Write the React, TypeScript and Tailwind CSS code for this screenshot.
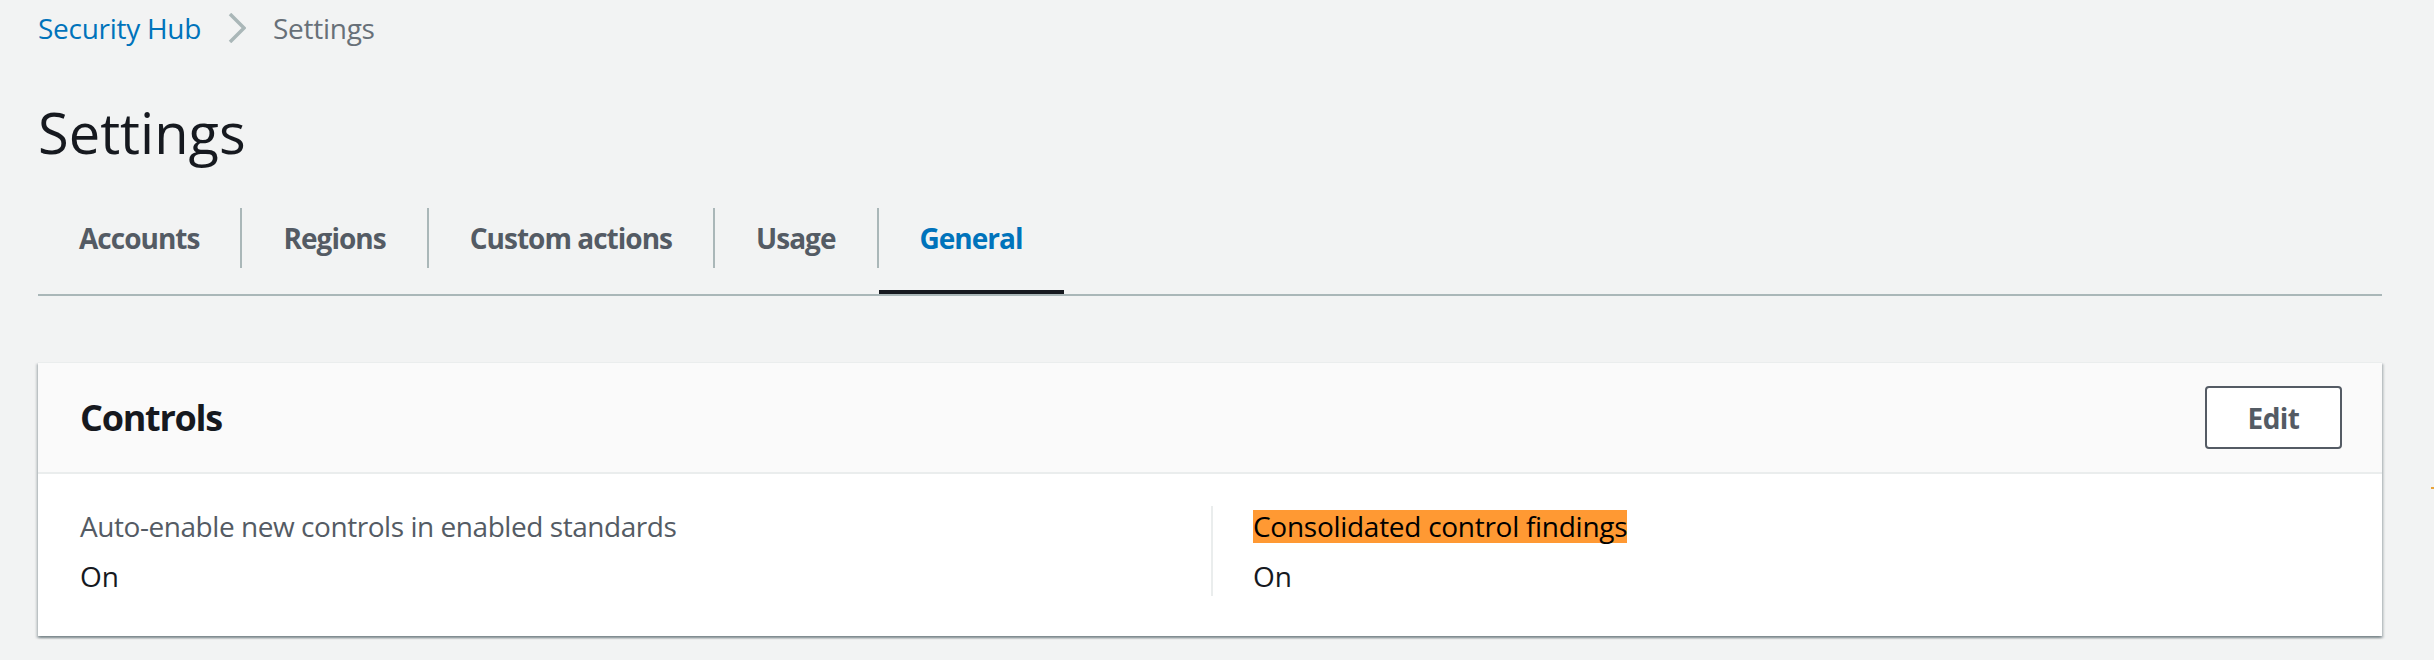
import React from "react";

const tabs = ["Accounts", "Regions", "Custom actions", "Usage", "General"];

function Chevron() {
  return (
    <svg width="18" height="30" viewBox="0 0 18 30" fill="none" className="mx-[27px]">
      <polyline points="2,1 16,15 2,29" stroke="#aab7b8" strokeWidth="3.5" />
    </svg>
  );
}

function Tabs() {
  return (
    <div className="flex border-b-2 border-[#aab7b8]">
      {tabs.map((t, i) => {
        const active = t === "General";
        return (
          <div key={t} className="flex">
            {i > 0 && <div className="h-[60px] w-[2px] bg-[#aab7b8]" />}
            <div className="flex h-[86px] flex-col">
              <div
                className={`flex h-[60px] items-center px-[41px] text-[28px] font-bold tracking-[-0.035em] ${
                  active ? "text-[#0073bb]" : "text-[#545b64]"
                }`}
              >
                {t}
              </div>
              <div className="flex-1" />
              <div className={`h-[4px] ${active ? "bg-[#16191f]" : ""}`} />
            </div>
          </div>
        );
      })}
    </div>
  );
}

function ControlsCard() {
  return (
    <div className="border-t border-[#eaeded] bg-white shadow-[0_2px_2px_0_rgba(0,28,36,0.3),2px_2px_2px_0_rgba(0,28,36,0.15),-2px_2px_2px_0_rgba(0,28,36,0.15)]">
      <div className="flex h-[111px] items-center justify-between border-b-2 border-[#eaeded] bg-[#fafafa] pl-[42px] pr-[40px]">
        <h2 className="text-[36px] font-bold tracking-[-0.035em] text-[#16191f]">Controls</h2>
        <button className="h-[63px] w-[137px] rounded-[4px] border-2 border-[#545b64] bg-white text-[28px] font-bold tracking-[-0.02em] text-[#545b64]">
          Edit
        </button>
      </div>
      <div className="grid grid-cols-2 pl-[42px] pr-[40px] pt-[32px] pb-[40px]">
        <div>
          <div className="h-[40px] text-[28px] leading-[40px] tracking-[-0.016em] text-[#545b64]">
            Auto-enable new controls in enabled standards
          </div>
          <div className="mt-[10px] h-[40px] text-[28px] leading-[40px] text-[#16191f]">On</div>
        </div>
        <div className="border-l-2 border-[#eaeded] pl-[40px]">
          <div className="flex h-[40px] items-center">
            <span className="inline-block h-[33px] bg-[#ff9933] text-[28px] leading-[33px] tracking-[-0.01em] text-black">
              Consolidated control findings
            </span>
          </div>
          <div className="mt-[10px] h-[40px] text-[28px] leading-[40px] text-[#16191f]">On</div>
        </div>
      </div>
    </div>
  );
}

export default function App() {
  return (
    <div
      className="relative h-[660px] w-full overflow-hidden bg-[#f2f3f3] pl-[38px] pr-[52px]"
      style={{ fontFamily: '"Open Sans", "Noto Sans", sans-serif' }}
    >
      <nav className="flex h-[56px] items-center text-[28px] tracking-[-0.01em]">
        <span className="text-[#0073bb]">Security Hub</span>
        <Chevron />
        <span className="text-[#687078]">Settings</span>
      </nav>
      <div className="flex h-[152px] items-center">
        <h1 className="text-[56px] font-medium leading-none text-[#16191f]">Settings</h1>
      </div>
      <Tabs />
      <div className="h-[66px]" />
      <ControlsCard />
      <span className="absolute right-0 top-[487px] h-[2px] w-[3px] bg-[#e8a33a]" />
    </div>
  );
}
